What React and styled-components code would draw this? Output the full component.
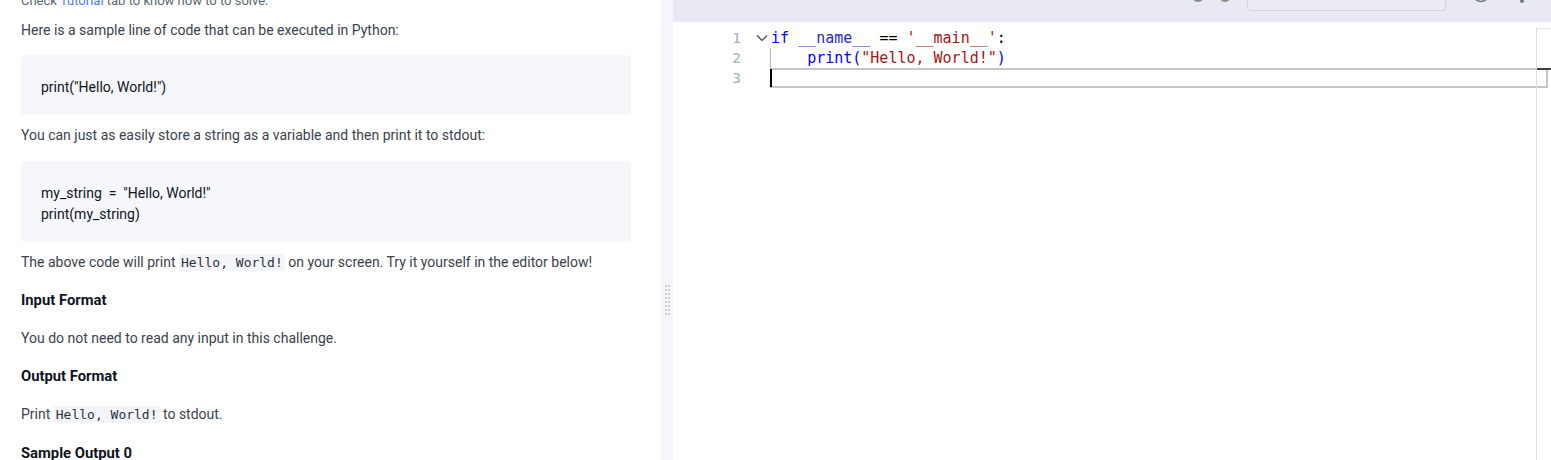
import React from 'react'
import styled, { createGlobalStyle } from 'styled-components'

const GlobalStyle = createGlobalStyle`
  html, body {
    margin: 0;
    padding: 0;
    background: #ffffff;
    overflow: hidden;
  }
  #root {
    height: 460px;
  }
`

const Page = styled.div`
  display: flex;
  width: 1551px;
  height: 460px;
  overflow: hidden;
  font-family: Roboto, 'Liberation Sans', sans-serif;
`

const Problem = styled.div`
  width: 661px;
  flex-shrink: 0;
  box-sizing: border-box;
  padding: 0 30px 0 21px;
  overflow: hidden;
  color: #39424e;
  font-size: 14px;
`

const Scrolled = styled.div`
  margin-top: -9px;
`

const Para = styled.p`
  margin: 0 0 ${(p) => p.mb ?? 18}px;
  line-height: 20px;
  font-size: ${(p) => (p.small ? 13 : 14)}px;
  color: ${(p) => (p.small ? '#576871' : '#39424e')};
`

const Heading = styled.p`
  margin: 0 0 18px;
  line-height: 20px;
  font-size: 14.8px;
  font-weight: 700;
  color: #0e141e;
`

const Link = styled.span`
  color: #4b7bf5;
`

const CodeBlock = styled.pre`
  margin: 0 0 10px;
  padding: 22px 20px 17px;
  background: #f6f7fb;
  border-radius: 4px;
  font-family: Roboto, 'Liberation Sans', sans-serif;
  font-size: 14px;
  line-height: 21px;
  color: #0e141e;
  white-space: pre;
`

const InlineCode = styled.code`
  font-family: 'DejaVu Sans Mono', monospace;
  font-size: 13px;
  background: #f3f5fa;
  color: #2a323c;
  padding: 1px 2px;
`

const Divider = styled.div`
  width: 12px;
  flex-shrink: 0;
  background: #f5f6fb;
  display: flex;
  justify-content: center;
  padding-top: 285px;
  box-sizing: border-box;
`

const Grip = styled.div`
  display: grid;
  grid-template-columns: repeat(2, 2px);
  grid-auto-rows: 2px;
  gap: 2px 1px;
  align-self: flex-start;
  span {
    width: 2px;
    height: 2px;
    background: #c9cbd3;
  }
`

const EditorPane = styled.div`
  flex: 1;
  display: flex;
  flex-direction: column;
  min-width: 0;
`

const Toolbar = styled.div`
  height: 22px;
  flex-shrink: 0;
  background: #e8e9f3;
  display: flex;
  align-items: flex-end;
  overflow: hidden;
  padding-left: 519px;
`

const ToolIcon = styled.div`
  width: ${(p) => p.size}px;
  height: ${(p) => p.size}px;
  margin: 0 ${(p) => p.gap}px ${(p) => p.lift}px 0;
  flex-shrink: 0;
  svg {
    display: block;
  }
`

const SelectBox = styled.div`
  width: 199px;
  height: 34px;
  margin: 0 26px 11px 0;
  flex-shrink: 0;
  box-sizing: border-box;
  border: 1px solid #d2d4de;
  border-radius: 4px;
  background: #ebecf5;
`

const Editor = styled.div`
  flex: 1;
  position: relative;
  background: #fffffe;
  display: flex;
  padding-top: 6px;
  font-family: 'DejaVu Sans Mono', monospace;
  font-size: 15px;
`

const Gutter = styled.div`
  width: 97px;
  flex-shrink: 0;
`

const GutterRow = styled.div`
  display: flex;
  height: 20px;
  align-items: center;
`

const LineNo = styled.span`
  width: 68px;
  text-align: right;
  font-size: 14.5px;
  color: #9fb3b8;
`

const Fold = styled.span`
  width: 29px;
  display: flex;
  justify-content: flex-end;
  padding-right: 2px;
  box-sizing: border-box;
`

const Code = styled.div`
  flex: 1;
  position: relative;
`

const Line = styled.div`
  height: 20px;
  line-height: 20px;
  box-sizing: border-box;
  white-space: pre;
  padding-left: 1px;
  margin-right: ${(p) => (p.current ? 3 : 0)}px;
  border: ${(p) => (p.current ? '2px solid #c2c6ca' : 'none')};
  box-shadow: ${(p) => (p.guide ? 'inset 1px 0 0 #b5b5b5' : 'none')};
`

const Caret = styled.span`
  position: absolute;
  left: 0;
  top: 41px;
  width: 2px;
  height: 18px;
  background: #000;
`

const Ruler = styled.div`
  position: absolute;
  right: 0;
  top: 6px;
  bottom: 0;
  width: 14px;
  border-left: 1px solid #dcdcdc;
  border-top: 1px solid #e4e4e4;
`

const RulerMark = styled.span`
  position: absolute;
  left: 0;
  right: 0;
  top: 39px;
  height: 2px;
  background: #404040;
`

const Tok = styled.span`
  color: ${(p) => p.c};
`

const KW = '#0000ff'
const VAR = '#1f2cc4'
const STR = '#a31515'

function Chevron() {
  return (
    <svg width="12" height="8" viewBox="0 0 12 8">
      <polyline points="1,1.5 6,6.5 11,1.5" fill="none" stroke="#424242" strokeWidth="1.2" />
    </svg>
  )
}

function App() {
  const dots = Array.from({ length: 16 })
  return (
    <>
      <GlobalStyle />
      <Page>
        <Problem>
          <Scrolled>
            <Para small mb={9}>Check <Link>Tutorial</Link> tab to know how to to solve.</Para>
            <Para mb={15}>Here is a sample line of code that can be executed in Python:</Para>
            <CodeBlock>print("Hello, World!")</CodeBlock>
            <Para mb={16}>You can just as easily store a string as a variable and then print it to stdout:</Para>
            <CodeBlock>{'my_string  =  "Hello, World!"\nprint(my_string)'}</CodeBlock>
            <Para mb={17}>
              The above code will print <InlineCode>Hello, World!</InlineCode> on your screen. Try it yourself in the editor below!
            </Para>
            <Heading>Input Format</Heading>
            <Para>You do not need to read any input in this challenge.</Para>
            <Heading>Output Format</Heading>
            <Para>
              Print <InlineCode>Hello, World!</InlineCode> to stdout.
            </Para>
            <Heading>Sample Output 0</Heading>
          </Scrolled>
        </Problem>

        <Divider>
          <Grip>
            {dots.map((_, i) => <span key={i} />)}
          </Grip>
        </Divider>

        <EditorPane>
          <Toolbar>
            <ToolIcon size={12} gap={15} lift={20}>
              <svg width="12" height="12" viewBox="0 0 12 12">
                <circle cx="6" cy="6" r="5" fill="none" stroke="#7b8a9a" strokeWidth="2" />
              </svg>
            </ToolIcon>
            <ToolIcon size={12} gap={16} lift={20}>
              <svg width="12" height="12" viewBox="0 0 12 12">
                <circle cx="6" cy="6" r="5" fill="none" stroke="#8a8f7a" strokeWidth="2" />
              </svg>
            </ToolIcon>
            <SelectBox />
            <ToolIcon size={18} gap={30} lift={19}>
              <svg width="18" height="18" viewBox="0 0 18 18">
                <circle cx="9" cy="9" r="7.5" fill="none" stroke="#6d7a86" strokeWidth="1.6" />
              </svg>
            </ToolIcon>
            <ToolIcon size={4} gap={0} lift={19}>
              <svg width="4" height="4" viewBox="0 0 4 4">
                <circle cx="2" cy="2" r="2" fill="#6d7a86" />
              </svg>
            </ToolIcon>
          </Toolbar>

          <Editor>
            <Gutter>
              <GutterRow><LineNo>1</LineNo><Fold><Chevron /></Fold></GutterRow>
              <GutterRow><LineNo>2</LineNo><Fold /></GutterRow>
              <GutterRow><LineNo>3</LineNo><Fold /></GutterRow>
            </Gutter>
            <Code>
              <Line>
                <Tok c={KW}>if</Tok> <Tok c={VAR}>__name__</Tok> <Tok c="#000">==</Tok> <Tok c={STR}>'__main__'</Tok><Tok c="#000">:</Tok>
              </Line>
              <Line guide>
                {'    '}<Tok c={KW}>print(</Tok><Tok c={STR}>"Hello, World!"</Tok><Tok c={KW}>)</Tok>
              </Line>
              <Line current />
              <Caret />
            </Code>
            <Ruler>
              <RulerMark />
            </Ruler>
          </Editor>
        </EditorPane>
      </Page>
    </>
  )
}

export default App
